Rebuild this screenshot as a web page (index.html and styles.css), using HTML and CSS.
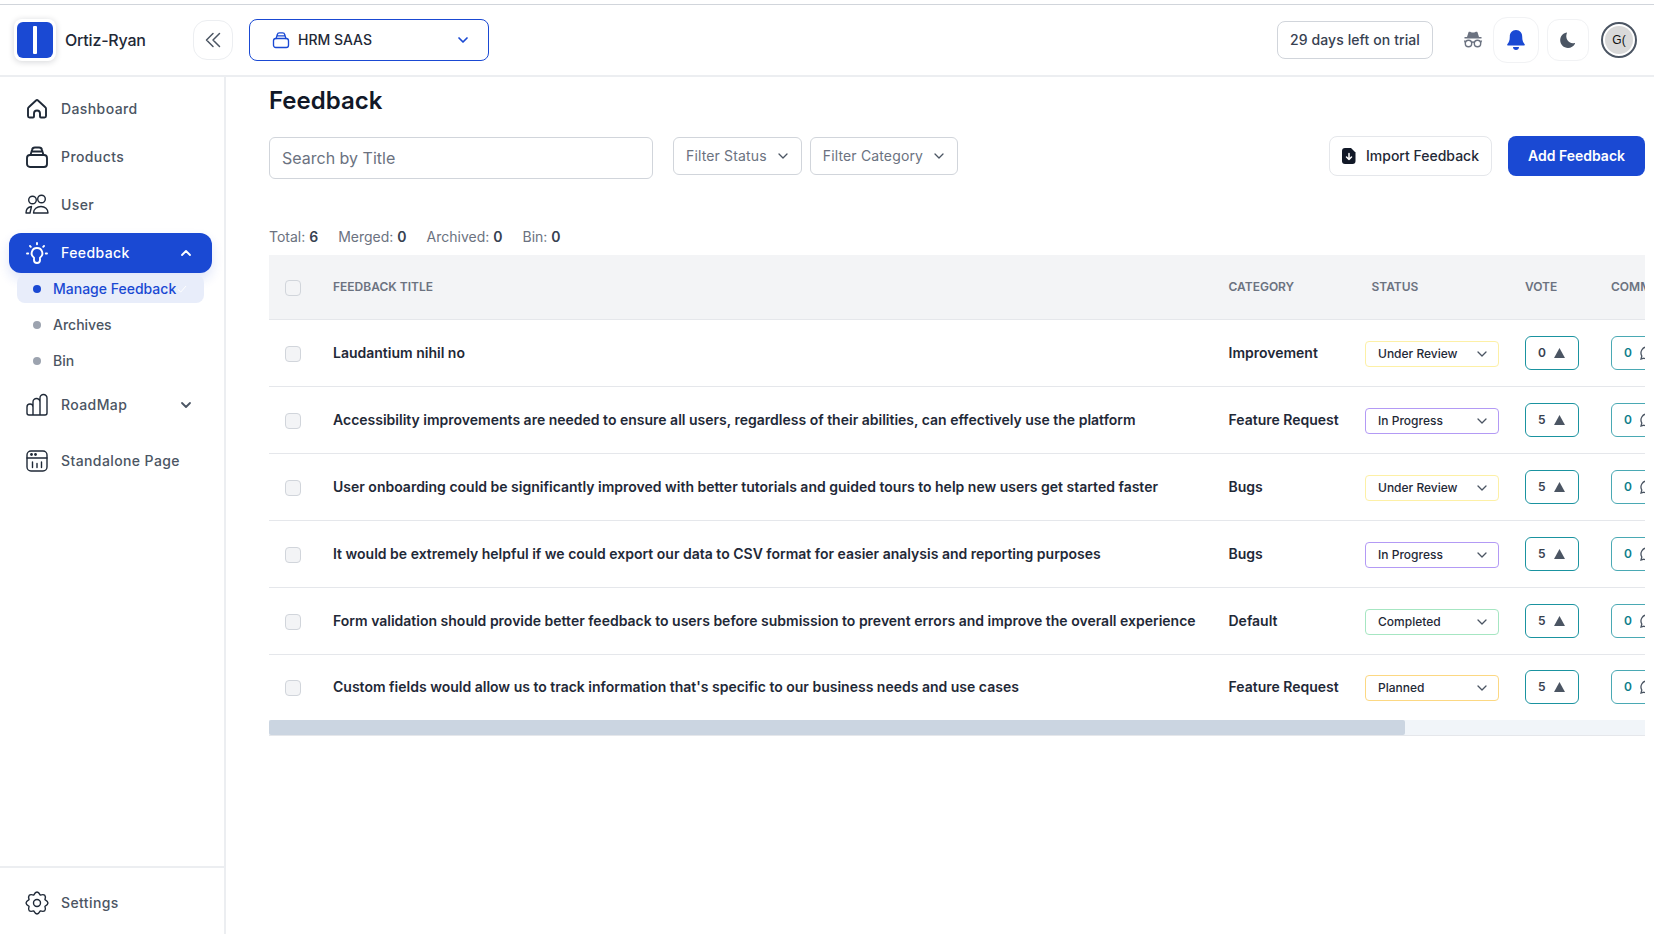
FILE: index.html
```html
<!DOCTYPE html>
<html lang="en">
<head>
<meta charset="utf-8">
<title>Feedback</title>
<link rel="stylesheet" href="styles.css">
</head>
<body>
<header class="topbar">
  <div class="brand">
    <span class="logo"><span class="logo-inner"><span class="logo-bar"></span></span></span>
    <span class="brand-name">Ortiz-Ryan</span>
  </div>
  <button class="collapse"><svg width="18" height="18" viewBox="0 0 18 18" fill="none" stroke="#4b5563" stroke-width="1.5" stroke-linecap="round" stroke-linejoin="round"><path d="M9 2.500 2.500 9 9 15.500M15.500 2.500 9 9l6.500 6.500"/></svg></button>
  <div class="project">
    <svg class="project-icon" width="18" height="18" viewBox="0 0 24 24" fill="none" stroke="#1a49d3" stroke-width="1.8" stroke-linecap="round" stroke-linejoin="round"><rect x="2" y="10" width="20" height="12" rx="3"/><path d="M5.500 10 7 5a3 3 0 0 1 3-2.500h4A3 3 0 0 1 17 5l1.500 5M6.500 6.500h11"/></svg>
    <span class="project-name">HRM SAAS</span>
    <svg class="project-chev" width="12" height="12" viewBox="0 0 12 12" fill="none" stroke="#1a49d3" stroke-width="1.700" stroke-linecap="round" stroke-linejoin="round"><path d="M2 4l4 4 4-4"/></svg>
  </div>
  <div class="top-right">
    <div class="trial">29 days left on trial</div>
    <svg class="spy" width="20" height="18" viewBox="0 0 20 18" fill="#6b7280"><path d="M5.500 1.200C6 .6 7 .8 8 1.200c1.300.5 2.700.5 4 0 1-.4 2-.6 2.500 0L16 6h2.500v1.500h-17V6H4z"/><g fill="none" stroke="#6b7280" stroke-width="1.400"><circle cx="5.500" cy="12.500" r="3.200"/><circle cx="14.500" cy="12.500" r="3.200"/><path d="M8.500 11.500c1-.7 2-.7 3 0M2.300 11.500 1.500 9.500M17.700 11.500l.8-2"/></g></svg>
    <button class="round-btn bell"><svg width="20" height="22" viewBox="0 0 20 22" fill="#1a49d3"><path d="M10 1C6 1 3.800 4 3.800 7.500c0 4-1 6-2.300 7.400-.7.700-.2 1.600.7 1.600h15.600c.9 0 1.400-.9.700-1.600-1.300-1.400-2.300-3.400-2.300-7.400C16.200 4 14 1 10 1z"/><path d="M7 18h6c0 1.700-1.300 3-3 3s-3-1.300-3-3z"/></svg></button>
    <button class="round-btn moon"><svg width="18" height="18" viewBox="0 0 18 18" fill="#4b5563"><path d="M7.500 1.500C3.800 2.300 1.200 5.500 1.200 9.300c0 4.300 3.500 7.700 7.800 7.700 3 0 5.700-1.700 7-4.300.2-.4-.2-.7-.6-.6C10 13.300 5.600 8 7.900 2.100c.2-.4-.1-.7-.4-.6z"/></svg></button>
    <span class="avatar"><span class="avatar-in">G(</span></span>
  </div>
</header>
<div class="shell">
  <aside class="sidebar">
    <nav class="nav">
      <a class="item"><svg class="ico ico-bold" viewBox="0 0 24 24"><path d="M4.500 20.500a1.500 1.500 0 0 1-1.500-1.500v-7.200a2 2 0 0 1 .7-1.500L11 3.500a1.500 1.500 0 0 1 2 0l7.300 6.800a2 2 0 0 1 .7 1.500V19a1.500 1.500 0 0 1-1.500 1.500H16a1 1 0 0 1-1-1v-3a3 3 0 0 0-6 0v3a1 1 0 0 1-1 1z"/></svg><span>Dashboard</span></a>
      <a class="item"><svg class="ico ico-bold" viewBox="0 0 24 24"><rect x="2" y="10" width="20" height="12" rx="3"/><path d="M5.500 10 7 5a3 3 0 0 1 3-2.500h4A3 3 0 0 1 17 5l1.500 5M6.500 6.500h11"/></svg><span>Products</span></a>
      <a class="item"><svg class="ico" viewBox="0 0 24 24"><circle cx="7.500" cy="7" r="3.800"/><circle cx="16.500" cy="6" r="3.800"/><path d="M1 20c0-3.500 2.500-6 5.500-6.500L5 20zM8.500 20c0-3.800 3.500-6.500 7.500-6.500s7 2.700 7 6.500z"/></svg><span>User</span></a>
      <a class="item active"><svg class="ico ico-bold" viewBox="0 0 24 24"><path d="M12 7a5.300 5.300 0 0 0-3 9.700v2.300a3 3 0 0 0 6 0v-2.300A5.300 5.300 0 0 0 12 7zM12 2v1.200M5 5l.8.8M19 5l-.8.8M2 12.500h1.200M20.800 12.500H22"/></svg><span>Feedback</span><svg class="chev" viewBox="0 0 12 12"><path d="M2 8l4-4 4 4"/></svg></a>
      <div class="sub">
        <a class="sub-item current"><i class="dot"></i><span>Manage Feedback</span><svg class="tick" width="10" height="10" viewBox="0 0 10 10" fill="none" stroke="#fff" stroke-width="1"><path d="M1 5.500 3.800 8 9 2"/></svg></a>
        <a class="sub-item"><i class="dot"></i><span>Archives</span></a>
        <a class="sub-item"><i class="dot"></i><span>Bin</span></a>
      </div>
      <a class="item road"><svg class="ico" viewBox="0 0 24 24"><path d="M2 14a3 3 0 0 1 6 0v8H4a2 2 0 0 1-2-2zM8 22V9a3.500 3.500 0 0 1 7 0v13zM15 22V5a3.500 3.500 0 0 1 7 0v15a2 2 0 0 1-2 2z"/></svg><span>RoadMap</span><svg class="chev" viewBox="0 0 12 12"><path d="M2 4l4 4 4-4"/></svg></a>
      <a class="item"><svg class="ico" viewBox="0 0 24 24"><rect x="2" y="2" width="20" height="20" rx="4"/><path d="M2 9h20M7.500 13v5.500M12 14.500v4M16.500 13v5.500"/><circle cx="6.500" cy="5.500" r="1.400" class="solid"/><circle cx="10.500" cy="5.500" r="1.400" class="solid"/></svg><span>Standalone Page</span></a>
    </nav>
    <div class="side-foot">
      <a class="item"><svg class="ico" viewBox="0 0 24 24"><path d="M19.950 8.710Q26 12 19.950 15.290Q21.900 21.900 15.290 19.950Q12 26 8.710 19.950Q2.100 21.900 4.050 15.290Q-2 12 4.050 8.710Q2.100 2.100 8.710 4.050Q12-2 15.290 4.050Q21.900 2.100 19.950 8.710z"/><circle cx="12" cy="12" r="3.500"/></svg><span>Settings</span></a>
    </div>
  </aside>
  <main class="main">
    <h1 class="title">Feedback</h1>
    <div class="toolbar">
      <input class="search" placeholder="Search by Title">
      <div class="filter">Filter Status<svg class="fchev" viewBox="0 0 12 12"><path d="M2 4l4 4 4-4"/></svg></div>
      <div class="filter">Filter Category<svg class="fchev" viewBox="0 0 12 12"><path d="M2 4l4 4 4-4"/></svg></div>
      <div class="spacer"></div>
      <button class="import"><svg width="14" height="16" viewBox="0 0 14 16"><path d="M3 0h6l4.500 4.500V13a3 3 0 0 1-3 3H3a3 3 0 0 1-3-3V3a3 3 0 0 1 3-3z" fill="#111827"/><path d="M7 5.500v6M4.500 9 7 11.500 9.500 9" fill="none" stroke="#fff" stroke-width="1.500" stroke-linecap="round" stroke-linejoin="round"/></svg>Import Feedback</button>
      <button class="add">Add Feedback</button>
    </div>
    <div class="stats">
      <span>Total: <b>6</b></span><span>Merged: <b>0</b></span><span>Archived: <b>0</b></span><span>Bin: <b>0</b></span>
    </div>
    <div class="table-wrap">
      <table class="table">
        <colgroup><col class="c-check"><col class="c-title"><col class="c-cat"><col class="c-status"><col class="c-vote"><col class="c-comm"></colgroup>
        <thead>
          <tr><th><span class="check"></span></th><th>Feedback Title</th><th>Category</th><th>Status</th><th>Vote</th><th>Comments</th></tr>
        </thead>
        <tbody>
          <tr><td><span class="check"></span></td><td>Laudantium nihil no</td><td>Improvement</td><td class="td-status"><div class="status yellow">Under Review<svg class="schev" viewBox="0 0 12 12"><path d="M2 4l4 4 4-4"/></svg></div></td><td><div class="vote">0<svg class="tri" width="11" height="10" viewBox="0 0 12 11"><path d="M6 0l6 11H0z"/></svg></div></td><td><div class="vote">0<svg class="bub" width="14" height="14" viewBox="0 0 14 14"><path d="M7 1a6 6 0 1 1-3 11.200L1 13l.8-3A6 6 0 0 1 7 1z"/></svg></div></td></tr>
          <tr><td><span class="check"></span></td><td>Accessibility improvements are needed to ensure all users, regardless of their abilities, can effectively use the platform</td><td>Feature Request</td><td class="td-status"><div class="status purple">In Progress<svg class="schev" viewBox="0 0 12 12"><path d="M2 4l4 4 4-4"/></svg></div></td><td><div class="vote">5<svg class="tri" width="11" height="10" viewBox="0 0 12 11"><path d="M6 0l6 11H0z"/></svg></div></td><td><div class="vote">0<svg class="bub" width="14" height="14" viewBox="0 0 14 14"><path d="M7 1a6 6 0 1 1-3 11.200L1 13l.8-3A6 6 0 0 1 7 1z"/></svg></div></td></tr>
          <tr><td><span class="check"></span></td><td>User onboarding could be significantly improved with better tutorials and guided tours to help new users get started faster</td><td>Bugs</td><td class="td-status"><div class="status yellow">Under Review<svg class="schev" viewBox="0 0 12 12"><path d="M2 4l4 4 4-4"/></svg></div></td><td><div class="vote">5<svg class="tri" width="11" height="10" viewBox="0 0 12 11"><path d="M6 0l6 11H0z"/></svg></div></td><td><div class="vote">0<svg class="bub" width="14" height="14" viewBox="0 0 14 14"><path d="M7 1a6 6 0 1 1-3 11.200L1 13l.8-3A6 6 0 0 1 7 1z"/></svg></div></td></tr>
          <tr><td><span class="check"></span></td><td>It would be extremely helpful if we could export our data to CSV format for easier analysis and reporting purposes</td><td>Bugs</td><td class="td-status"><div class="status purple">In Progress<svg class="schev" viewBox="0 0 12 12"><path d="M2 4l4 4 4-4"/></svg></div></td><td><div class="vote">5<svg class="tri" width="11" height="10" viewBox="0 0 12 11"><path d="M6 0l6 11H0z"/></svg></div></td><td><div class="vote">0<svg class="bub" width="14" height="14" viewBox="0 0 14 14"><path d="M7 1a6 6 0 1 1-3 11.200L1 13l.8-3A6 6 0 0 1 7 1z"/></svg></div></td></tr>
          <tr><td><span class="check"></span></td><td>Form validation should provide better feedback to users before submission to prevent errors and improve the overall experience</td><td>Default</td><td class="td-status"><div class="status green">Completed<svg class="schev" viewBox="0 0 12 12"><path d="M2 4l4 4 4-4"/></svg></div></td><td><div class="vote">5<svg class="tri" width="11" height="10" viewBox="0 0 12 11"><path d="M6 0l6 11H0z"/></svg></div></td><td><div class="vote">0<svg class="bub" width="14" height="14" viewBox="0 0 14 14"><path d="M7 1a6 6 0 1 1-3 11.200L1 13l.8-3A6 6 0 0 1 7 1z"/></svg></div></td></tr>
          <tr class="last"><td><span class="check"></span></td><td>Custom fields would allow us to track information that's specific to our business needs and use cases</td><td>Feature Request</td><td class="td-status"><div class="status amber">Planned<svg class="schev" viewBox="0 0 12 12"><path d="M2 4l4 4 4-4"/></svg></div></td><td><div class="vote">5<svg class="tri" width="11" height="10" viewBox="0 0 12 11"><path d="M6 0l6 11H0z"/></svg></div></td><td><div class="vote">0<svg class="bub" width="14" height="14" viewBox="0 0 14 14"><path d="M7 1a6 6 0 1 1-3 11.200L1 13l.8-3A6 6 0 0 1 7 1z"/></svg></div></td></tr>
        </tbody>
      </table>
    </div>
    <div class="scrollbar"><div class="thumb"></div></div>
  </main>
</div>
</body>
</html>
```

FILE: styles.css
```css
* { box-sizing: border-box; }
html, body { height: 100%; }
body {
  margin: 0;
  padding-top: 4px;
  display: flex;
  flex-direction: column;
  height: 934px;
  overflow: hidden;
  background: #fff;
  color: #111827;
  font-family: Inter, "Liberation Sans", sans-serif;
  line-height: 20px;
}
button { font-family: inherit; line-height: 20px; cursor: pointer; }

.topbar {
  flex: none;
  height: 73px;
  display: flex;
  align-items: center;
  border-top: 1px solid #d1d5db;
  border-bottom: 2px solid #eceef1;
  padding-left: 14px;
  padding-right: 17px;
}
.brand { display: flex; align-items: center; width: 179px; }
.logo {
  width: 42px;
  height: 42px;
  padding: 3px;
  background: #fff;
  border-radius: 8px;
  box-shadow: 0 1px 6px rgba(17, 24, 39, .18);
  display: flex;
}
.logo-inner {
  flex: 1;
  background: #1a49d3;
  border-radius: 6px;
  display: flex;
  align-items: center;
  justify-content: center;
}
.logo-bar { width: 4px; height: 28px; background: #fff; border-radius: 1px; }
.brand-name { margin-left: 9px; font-size: 16px; font-weight: 500; letter-spacing: -.2px; color: #1f2937; }
.collapse {
  width: 40px;
  height: 40px;
  padding: 0;
  background: #fff;
  border: 1px solid #eceef1;
  border-radius: 14px;
  display: flex;
  align-items: center;
  justify-content: center;
}
.project {
  margin-left: 16px;
  width: 240px;
  height: 42px;
  display: flex;
  align-items: center;
  padding-left: 22px;
  border: 1px solid #1a49d3;
  border-radius: 8px;
}
.project-name { margin-left: 8px; font-size: 14px; font-weight: 500; color: #1f2937; }
.project-chev { margin-left: auto; margin-right: 19px; }
.top-right { margin-left: auto; display: flex; align-items: center; }
.trial {
  width: 156px;
  height: 38px;
  display: flex;
  align-items: center;
  justify-content: center;
  border: 1px solid #d1d5db;
  border-radius: 8px;
  font-size: 14px;
  font-weight: 500;
  letter-spacing: .1px;
  color: #374151;
}
.spy { margin-left: 30px; margin-right: 10px; }
.round-btn {
  padding: 0;
  background: #fff;
  border: 1px solid #f1f2f4;
  display: flex;
  align-items: center;
  justify-content: center;
}
.bell { width: 46px; height: 46px; border-radius: 14px; }
.moon { width: 42px; height: 42px; border-radius: 12px; margin-left: 8px; }
.avatar {
  margin-left: 12px;
  width: 36px;
  height: 36px;
  border-radius: 50%;
  border: 2px solid #4b5563;
  padding: 2px;
  display: flex;
}
.avatar-in {
  flex: 1;
  border-radius: 50%;
  background: #d9d9d9;
  display: flex;
  align-items: center;
  justify-content: center;
  font-family: "Liberation Sans", sans-serif;
  font-size: 12px;
  color: #111;
}

.shell { flex: 1; display: flex; min-height: 0; }
.sidebar {
  flex: none;
  width: 226px;
  border-right: 2px solid #eceef1;
  display: flex;
  flex-direction: column;
}
.nav { flex: 1; padding: 8px 12px 0 9px; }
.item {
  height: 48px;
  display: flex;
  align-items: center;
  padding-left: 16px;
  border-radius: 12px;
  font-size: 14px;
  font-weight: 500;
  letter-spacing: .4px;
  color: #4b5563;
}
.ico {
  flex: none;
  width: 24px;
  height: 24px;
  margin-right: 12px;
  fill: none;
  stroke: #1f2937;
  stroke-width: 1.400;
  stroke-linecap: round;
  stroke-linejoin: round;
}
.ico-bold { stroke-width: 1.900; }
.ico .solid { fill: #1f2937; stroke: none; }
.chev {
  width: 12px;
  height: 12px;
  margin-left: auto;
  margin-right: 20px;
  fill: none;
  stroke: currentColor;
  stroke-width: 1.800;
  stroke-linecap: round;
  stroke-linejoin: round;
}
.active {
  height: 40px;
  margin-top: 4px;
  background: #1a49d3;
  color: #fff;
  box-shadow: 0 6px 12px rgba(26, 73, 211, .14);
}
.active .ico { stroke: #fff; }
.sub { margin-top: 2px; padding: 0 8px; }
.sub-item {
  height: 28px;
  margin-bottom: 8px;
  display: flex;
  align-items: center;
  padding-left: 16px;
  border-radius: 8px;
  font-size: 14px;
  font-weight: 500;
  color: #4b5563;
}
.current { background: #e8edfa; color: #1a49d3; }
.dot { width: 8px; height: 8px; border-radius: 50%; background: #9ca3af; margin-right: 12px; }
.current .dot { background: #1a49d3; }
.tick { margin-left: 1px; }
.road { margin-top: -2px; margin-bottom: 8px; }
.side-foot { flex: none; height: 68px; padding: 11px 9px 0; border-top: 2px solid #eceef1; }

.main { flex: 1; min-width: 0; padding: 8px 9px 0 43px; }
.title { margin: 0 0 19px; font-size: 24px; line-height: 32px; font-weight: 600; color: #111827; }
.toolbar { display: flex; align-items: flex-start; }
.search {
  margin-top: 1px;
  width: 384px;
  height: 42px;
  padding: 0 12px;
  border: 1px solid #d1d5db;
  border-radius: 6px;
  font-family: inherit;
  font-size: 16px;
  color: #374151;
  outline: none;
}
.search::placeholder { color: #6b7280; opacity: 1; }
.filter {
  margin-top: 1px;
  margin-left: 8px;
  height: 38px;
  padding: 0 12px;
  display: flex;
  align-items: center;
  border: 1px solid #d1d5db;
  border-radius: 6px;
  font-size: 14px;
  letter-spacing: .15px;
  color: #6b7280;
}
.search + .filter { margin-left: 20px; }
.fchev, .schev {
  width: 12px;
  height: 12px;
  fill: none;
  stroke: #4b5563;
  stroke-width: 1.300;
  stroke-linecap: round;
  stroke-linejoin: round;
}
.fchev { margin-left: 10px; }
.spacer { flex: 1; }
.import {
  height: 40px;
  width: 163px;
  display: flex;
  align-items: center;
  justify-content: center;
  gap: 10px;
  padding: 0;
  background: #fff;
  border: 1px solid #e5e7eb;
  border-radius: 8px;
  font-size: 14px;
  font-weight: 500;
  color: #1f2937;
}
.add {
  margin-left: 16px;
  width: 137px;
  height: 40px;
  padding: 0;
  background: #1a49d3;
  border: 0;
  border-radius: 8px;
  font-size: 14px;
  font-weight: 600;
  color: #fff;
}
.stats {
  margin-top: 48px;
  height: 20px;
  display: flex;
  gap: 20px;
  font-size: 14px;
  color: #6b7280;
}
.stats b { font-weight: 600; color: #374151; }
.table-wrap { margin-top: 8px; overflow: hidden; }
.table {
  width: 1667px;
  table-layout: fixed;
  border-collapse: collapse;
}
.c-check { width: 48px; }
.c-title { width: 895.500px; }
.c-cat { width: 143px; }
.c-status { width: 153.500px; }
.c-vote { width: 86px; }
.c-comm { width: 341px; }
th {
  height: 64px;
  padding: 0 0 0 16px;
  background: #f3f4f6;
  border-bottom: 1px solid #e5e7eb;
  text-align: left;
  font-size: 12px;
  font-weight: 600;
  text-transform: uppercase;
  color: #6b7280;
  white-space: nowrap;
}
td {
  height: 67px;
  padding: 0 0 0 16px;
  border-bottom: 1px solid #e5e7eb;
  font-size: 14px;
  font-weight: 600;
  color: #1f2937;
  white-space: nowrap;
}
.last td { border-bottom: 0; height: 66px; }
td.td-status { padding-left: 9.500px; }
.check {
  display: block;
  width: 16px;
  height: 16px;
  margin-top: 2px;
  background: #f3f4f6;
  border: 1px solid #d1d5db;
  border-radius: 4px;
}
.status {
  width: 134px;
  height: 26px;
  display: flex;
  align-items: center;
  justify-content: space-between;
  margin-top: 2px;
  padding: 0 10px 0 12px;
  border: 1px solid;
  border-radius: 4px;
  font-size: 12px;
  font-weight: 500;
  color: #1f2937;
}
.yellow { border-color: #fdf0a6; }
.purple { border-color: #b39af5; }
.green { border-color: #a6e6c2; }
.amber { border-color: #fcd883; }
.vote {
  width: 54px;
  height: 34px;
  display: flex;
  align-items: center;
  gap: 8px;
  padding-left: 12px;
  border: 1px solid #1a93a0;
  border-radius: 6px;
  font-size: 12px;
  font-weight: 600;
  color: #374151;
}
.tri { fill: #4b5563; }
.bub { fill: none; stroke: #4b5563; stroke-width: 1.300; }
td:last-child .vote { color: #0f7f8c; border-color: #4aa9b4; }
.scrollbar {
  height: 16px;
  background: #f1f5f9;
  border-bottom: 1px solid #e5e7eb;
}
.thumb { width: 1136px; height: 15px; background: #cbd5e1; border-radius: 2px; }
```
